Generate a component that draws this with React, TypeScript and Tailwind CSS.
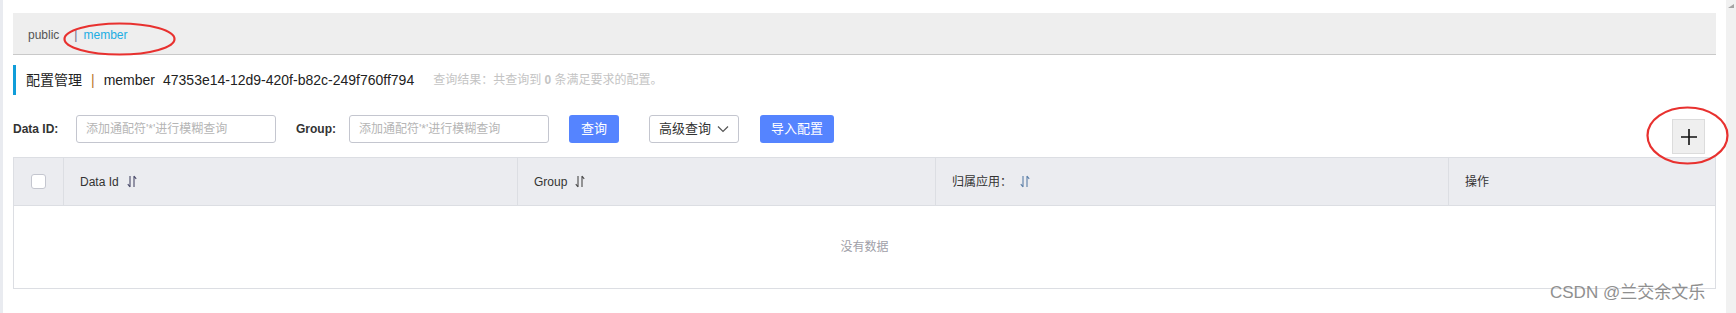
import React from "react";

function SortIcon({ color = "#555" }: { color?: string }) {
  return (
    <svg width="10" height="13" viewBox="0 0 10 13" className="inline-block ml-[8px]" fill="none" stroke={color} strokeWidth="1.1">
      <path d="M3 1 V12 M3 12 L0.8 9.2" />
      <path d="M7 12 V1 M7 1 L9.2 3.8" />
    </svg>
  );
}

export default function App() {
  const font = { fontFamily: '"Liberation Sans", Arial, "Noto Sans CJK SC", sans-serif' };
  return (
    <div className="relative w-[1736px] h-[313px] bg-white flex overflow-hidden text-[#333]" style={font}>
      <div className="w-[3px] h-full bg-[#e9ebf0] shrink-0" />
      <div className="flex-1 pl-[10px] pr-[10px] pt-[13px] flex flex-col">
        {/* breadcrumb */}
        <div className="h-[42px] bg-[#eeeeee] border-b border-[#c9c9c9] flex items-center pl-[15px] pt-[2px] text-[12px]">
          <span className="text-[#555]">public</span>
          <span className="text-[#6b6b8a] ml-[15px] mr-[6px]">|</span>
          <span className="text-[#21ade3]">member</span>
        </div>
        {/* title */}
        <div className="mt-[10px] h-[30px] flex items-center border-l-[3px] border-[#109dd9] pl-[10px]">
          <span className="text-[14px] text-[#222]">配置管理</span>
          <span className="text-[14px] text-[#b8772a] mx-[9px]">|</span>
          <span className="text-[14px] text-[#222]">member</span>
          <span className="text-[14px] text-[#222] ml-[8px]">47353e14-12d9-420f-b82c-249f760ff794</span>
          <span className="text-[12px] text-[#c4c4c4] ml-[19px]">
            查询结果：共查询到 <b className="font-bold">0</b> 条满足要求的配置。
          </span>
        </div>
        {/* search row */}
        <div className="mt-[20px] flex items-start text-[12px]">
          <div className="h-[28px] flex items-center font-bold text-[#333] w-[63px]">Data ID:</div>
          <div className="h-[28px] w-[200px] border border-[#c4c6cf] rounded-[3px] flex items-center pl-[9px] text-[#b5b5b5]">
            添加通配符'*'进行模糊查询
          </div>
          <div className="h-[28px] flex items-center font-bold text-[#333] ml-[20px] w-[53px]">Group:</div>
          <div className="h-[28px] w-[200px] border border-[#c4c6cf] rounded-[3px] flex items-center pl-[9px] text-[#b5b5b5]">
            添加通配符'*'进行模糊查询
          </div>
          <div className="h-[28px] w-[50px] ml-[20px] rounded-[3px] bg-[#5584ff] text-white flex items-center justify-center text-[13px]">
            查询
          </div>
          <div className="h-[28px] w-[90px] ml-[30px] rounded-[3px] border border-[#c4c6cf] bg-white flex items-center justify-center text-[13px] text-[#333]">
            高级查询
            <svg width="12" height="8" viewBox="0 0 12 8" className="ml-[6px]" fill="none" stroke="#555" strokeWidth="1.2">
              <path d="M1 1.5 L6 6.5 L11 1.5" />
            </svg>
          </div>
          <div className="h-[28px] w-[74px] ml-[21px] rounded-[3px] bg-[#5584ff] text-white flex items-center justify-center text-[13px]">
            导入配置
          </div>
          <div className="ml-auto mr-[11px] mt-[4px] w-[33px] h-[35px] bg-[#efefef] border border-[#dcdcdc] flex items-center justify-center">
            <svg width="18" height="18" viewBox="0 0 18 18" stroke="#111" strokeWidth="1.6">
              <path d="M9 1 V17 M1 9 H17" />
            </svg>
          </div>
        </div>
        {/* table */}
        <div className="mt-[3px] border border-[#dcdee3] text-[12px]">
          <div className="h-[48px] bg-[#ebecf0] border-b border-[#dcdee3] flex">
            <div className="w-[50px] border-r border-[#dcdee3] flex items-center justify-center">
              <div className="w-[15px] h-[15px] bg-white border border-[#c4c6cf] rounded-[3px]" />
            </div>
            <div className="w-[454px] border-r border-[#dcdee3] flex items-center pl-[16px]">
              Data Id<SortIcon color="#4a4a6a" />
            </div>
            <div className="w-[418px] border-r border-[#dcdee3] flex items-center pl-[16px]">
              Group<SortIcon color="#4a4a4a" />
            </div>
            <div className="w-[513px] border-r border-[#dcdee3] flex items-center pl-[16px]">
              归属应用：<SortIcon color="#5b7fa8" />
            </div>
            <div className="flex-1 flex items-center pl-[16px]">操作</div>
          </div>
          <div className="h-[82px] flex items-center justify-center text-[#a0a0a8]">没有数据</div>
        </div>
      </div>
      <div className="w-[10px] h-full bg-[#f1f1f1] shrink-0 relative">
        <svg width="6" height="4" viewBox="0 0 6 4" className="absolute left-[2px] top-[4px]">
          <path d="M0 4 L6 4 L6 0 Z" fill="#a3a3a3" />
        </svg>
      </div>

      {/* annotations */}
      <svg className="absolute left-0 top-0 pointer-events-none" width="1736" height="313">
        <ellipse cx="119.5" cy="39" rx="55" ry="15.5" fill="none" stroke="#e8312f" strokeWidth="2.2" />
        <ellipse cx="1687.5" cy="135.5" rx="40" ry="28" fill="none" stroke="#e8312f" strokeWidth="2.2" />
      </svg>
      <div
        className="absolute left-[1550px] top-[283px] text-[17px] leading-[20px] text-[#8f8f8f] whitespace-nowrap"
        style={{ fontFamily: '"Liberation Sans", Arial, "Noto Sans CJK SC", sans-serif' }}
      >
        CSDN @兰交余文乐
      </div>
    </div>
  );
}
